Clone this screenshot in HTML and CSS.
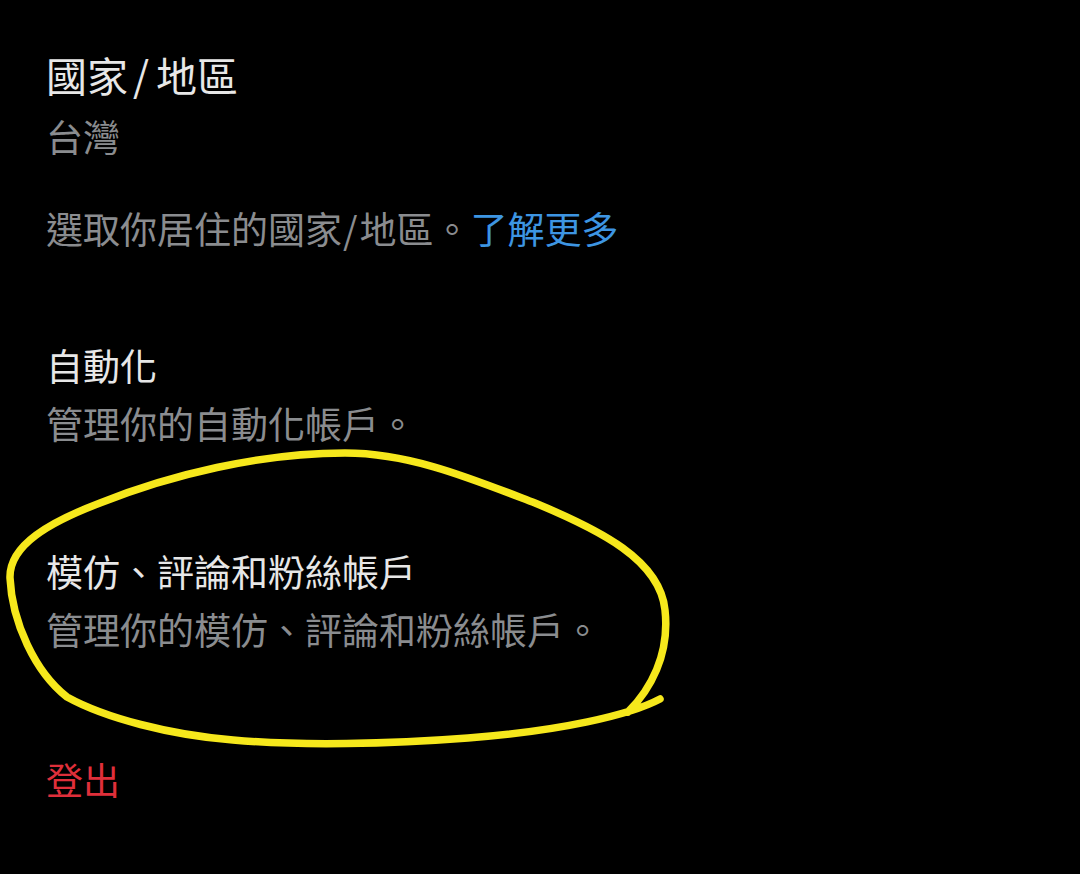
FILE: index.html
```html
<!DOCTYPE html>
<html lang="zh-Hant">
<head>
<meta charset="utf-8">
<title>設定</title>
<link rel="stylesheet" href="styles.css">
</head>
<body>
<main class="settings">
  <section class="item item-country">
    <h2 class="item-title item-title-lg">國家<span class="slash">/</span>地區</h2>
    <p class="item-value">台灣</p>
    <p class="item-note">選取你居住的國家<span class="slash">/</span>地區。<a class="link" href="#">了解更多</a></p>
  </section>
  <section class="item item-automation">
    <h2 class="item-title">自動化</h2>
    <p class="item-desc">管理你的自動化帳戶。</p>
  </section>
  <section class="item item-parody">
    <h2 class="item-title">模仿、評論和粉絲帳戶</h2>
    <p class="item-desc">管理你的模仿、評論和粉絲帳戶。</p>
  </section>
  <a class="logout" href="#">登出</a>
</main>
<svg class="annotation" viewBox="0 0 1080 874" width="1080" height="874" aria-hidden="true">
  <path class="circle" d="M 660 699
    C 630 715 560 731 468 738
    C 390 744 300 746 233 740
    C 170 735 105 718 67 697
    C 35 672 12 622 10 578
    C 9 545 50 522 100 503
    C 170 475 260 453 345 453
    C 410 453 470 478 535 503
    C 600 530 660 560 665 610
    C 670 655 650 690 628 712" />
</svg>
</body>
</html>
```
FILE: styles.css
```css
html, body {
  margin: 0;
  padding: 0;
  background: #000;
}
body {
  position: relative;
  width: 1080px;
  height: 874px;
  overflow: hidden;
  font-family: "Noto Sans CJK TC", "Noto Sans CJK SC", "Noto Sans", sans-serif;
  -webkit-font-smoothing: antialiased;
}
.settings {
  display: flex;
  flex-direction: column;
  padding: 48px 46px 0 46px;
}
.item {
  display: flex;
  flex-direction: column;
  gap: 10px;
}
.item-title,
.item-value,
.item-note,
.item-desc,
.logout {
  margin: 0;
  font-size: 37px;
  line-height: 48px;
  font-weight: 400;
}
.item-title {
  color: #e7e7e7;
}
.item-title-lg {
  font-size: 41px;
  line-height: 52px;
}
.item-title-lg .slash {
  padding: 0 7px 0 5px;
}
.item-note .slash {
  padding: 0 2px 0 1px;
}
.item-value {
  color: #8a8c8f;
  margin-top: 2px;
}
.item-note {
  color: #8a8c8f;
  margin-top: 34px;
}
.item-desc {
  color: #8a8c8f;
}
.link {
  color: #3d95e2;
  text-decoration: none;
}
.item-automation {
  margin-top: 89px;
}
.item-parody {
  margin-top: 100px;
}
.logout {
  margin-top: 102px;
  color: #df2f3a;
  text-decoration: none;
  align-self: flex-start;
}
.annotation {
  position: absolute;
  top: 0;
  left: 0;
  pointer-events: none;
}
.circle {
  fill: none;
  stroke: #f6e81c;
  stroke-width: 7.5;
  stroke-linecap: round;
  stroke-linejoin: round;
}
```
